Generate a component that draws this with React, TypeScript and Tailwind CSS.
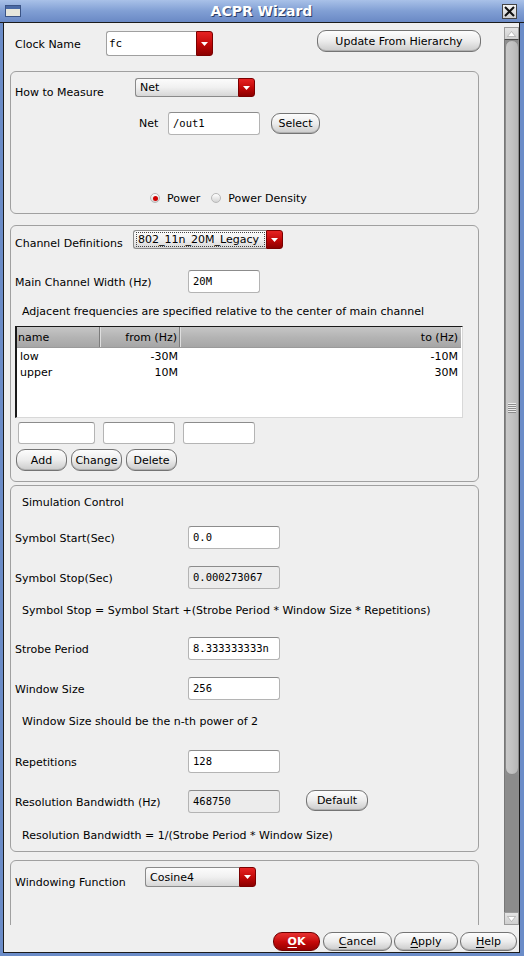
import React from "react";

const sans = "font-['DejaVu_Sans',sans-serif]";
const mono = "font-['DejaVu_Sans_Mono',monospace]";

function Arrow({ down = true }: { down?: boolean }) {
  return (
    <svg width="7" height="4" viewBox="0 0 7 4">
      {down ? <polygon points="0,0 7,0 3.5,4" fill="#fff" /> : <polygon points="0,4 7,4 3.5,0" fill="#fff" />}
    </svg>
  );
}

function RedDrop({ className = "" }: { className?: string }) {
  return (
    <div
      className={`w-[17px] shrink-0 flex items-center justify-center rounded-r-[3px] border border-[#7a0000] bg-linear-to-b from-[#e62222] via-[#c40808] to-[#8c0000] ${className}`}
    >
      <Arrow />
    </div>
  );
}

function Combo({ text, className, focus = false }: { text: string; className: string; focus?: boolean }) {
  return (
    <div className={`flex shrink-0 ${className}`}>
      <div className="flex-1 flex items-center rounded-l-[3px] border border-r-0 border-[#8a8a8a] bg-linear-to-b from-[#fcfcfc] via-[#f0f0f0] to-[#d6d6d6] pl-[2px] pr-[1px] py-[1px]">
        <div
          className={`h-full flex-1 flex items-center pl-[1px] leading-[13px] ${focus ? "border border-dotted border-[#444]" : "border border-transparent"}`}
        >
          {text}
        </div>
      </div>
      <RedDrop />
    </div>
  );
}

function Btn({ children, className = "" }: { children: React.ReactNode; className?: string }) {
  return (
    <div
      className={`shrink-0 flex items-center justify-center rounded-[9px] border border-[#747474] bg-linear-to-b from-[#fdfdfd] via-[#ececec] to-[#cbcbcb] shadow-[inset_0_-1px_0_#b0b0b0] text-black leading-[13px] ${className}`}
    >
      {children}
    </div>
  );
}

function Field({ value = "", ro = false, className = "" }: { value?: string; ro?: boolean; className?: string }) {
  return (
    <div
      className={`shrink-0 flex items-center rounded-[3px] border border-[#b4b4b4] border-t-[#8c8c8c] pl-[4px] pt-[1px] ${mono} text-[10.5px] ${
        ro ? "bg-[#ececec]" : "bg-white"
      } ${className}`}
    >
      {value}
    </div>
  );
}

function Radio({ on }: { on: boolean }) {
  return (
    <div className="w-[10px] h-[10px] shrink-0 rounded-full border border-[#b8b8b8] bg-linear-to-b from-[#ffffff] to-[#d4d4d4] flex items-center justify-center">
      {on && <div className="w-[5px] h-[5px] rounded-full bg-[#d00000]" />}
    </div>
  );
}

function Row({ label, value, ro = false, mt, children }: { label: string; value: string; ro?: boolean; mt: string; children?: React.ReactNode }) {
  return (
    <div className={`flex items-center h-[23px] ${mt}`}>
      <div className="w-[173px] shrink-0 leading-[13px] pt-[1px]">{label}</div>
      <Field value={value} ro={ro} className="w-[92px] h-[23px]" />
      {children}
    </div>
  );
}

function ScrollBar() {
  return (
    <div className="w-[15px] shrink-0 pt-[4px] flex flex-col">
      <div className="h-[13px] flex items-center justify-center bg-linear-to-b from-[#e4e4e4] to-[#cfcfcf] border border-[#9a9a9a] border-b-[#4a4a4a]">
        <svg width="9" height="6" viewBox="0 0 9 6">
          <polygon points="0.5,5.5 8.5,5.5 4.5,0.5" fill="#fff" stroke="#9a9a9a" strokeWidth="0.6" />
        </svg>
      </div>
      <div className="h-[735px] bg-[#8e8e8e] border-l border-[#777]">
        <div className="h-full rounded-[7px] border border-[#8a8a8a] bg-linear-to-r from-[#c8c8c8] via-[#c2c2c2] to-[#b6b6b6] flex flex-col items-center justify-center gap-[1px]">
          {[0, 1, 2, 3, 4].map((i) => (
            <div key={i} className="w-[8px] h-[1px] bg-[#eaeaea] shadow-[0_1px_0_#8a8a8a]" />
          ))}
        </div>
      </div>
      <div className="flex-1 bg-[#8c8c8c] border-l border-[#777]" />
      <div className="h-[13px] flex items-center justify-center bg-linear-to-b from-[#e4e4e4] to-[#cfcfcf] border border-[#9a9a9a]">
        <svg width="9" height="6" viewBox="0 0 9 6">
          <polygon points="0.5,0.5 8.5,0.5 4.5,5.5" fill="#fff" stroke="#9a9a9a" strokeWidth="0.6" />
        </svg>
      </div>
    </div>
  );
}

function U({ c }: { c: string }) {
  return <span className="underline underline-offset-2">{c}</span>;
}

export default function App() {
  return (
    <div className={`w-[524px] h-[956px] bg-[#6b8cc8] flex flex-col text-[11px] text-black ${sans}`}>
      {/* title bar */}
      <div className="h-[23px] shrink-0 flex items-center bg-linear-to-b from-[#a9c1e8] via-[#819fd4] to-[#6a89c5] border-b border-[#1c1c1c]">
        <div className="ml-[5px] w-[16px] h-[12px] border border-[#3b5486] bg-[#e6e6dc] flex flex-col">
          <div className="h-[3px] bg-[#4a6aa6]" />
        </div>
        <div className="flex-1 text-center text-white font-bold text-[14px] leading-[18px] [text-shadow:1px_1px_0_#2b3f69]">
          ACPR Wizard
        </div>
        <div className="mr-[7px] w-[15px] h-[15px] border border-[#444] bg-linear-to-b from-[#f4f4f4] to-[#d0d0d0] flex items-center justify-center">
          <svg width="11" height="11" viewBox="0 0 11 11">
            <path d="M1 1 L10 10 M10 1 L1 10" stroke="#111" strokeWidth="2" />
          </svg>
        </div>
      </div>

      <div className="flex-1 ml-[3px] mr-[4px] mb-[3px] border-l border-r border-b border-[#1c1c1c] bg-[#efefef] flex flex-col">
        <div className="h-[902px] flex">
          <div className="flex-1 overflow-hidden flex flex-col">
            {/* clock row */}
            <div className="h-[48px] shrink-0 flex items-start pl-[11px]">
              <div className="w-[91px] mt-[15px] leading-[13px]">Clock Name</div>
              <div className="mt-[8px] flex w-[107px] h-[25px]">
                <div className={`flex-1 flex items-center pl-[2px] pt-[2px] bg-white border border-r-0 border-[#a0a0a0] rounded-l-[3px] ${mono}`}>fc</div>
                <RedDrop />
              </div>
              <Btn className="ml-[104px] mt-[7px] w-[164px] h-[22px]">Update From Hierarchy</Btn>
            </div>

            {/* how to measure */}
            <div className="ml-[6px] w-[469px] h-[143px] shrink-0 rounded-[6px] border border-[#a0a0a0] pl-[4px] flex flex-col">
              <div className="mt-[6px] h-[19px] flex items-start">
                <div className="w-[120px] mt-[8px] leading-[13px]">How to Measure</div>
                <Combo text="Net" className="w-[120px] h-[19px]" />
              </div>
              <div className="mt-[15px] h-[23px] flex items-center">
                <div className="ml-[124px] w-[29px] leading-[13px]">Net</div>
                <Field value="/out1" className="w-[92px] h-[23px]" />
                <Btn className="ml-[11px] w-[49px] h-[21px]">Select</Btn>
              </div>
              <div className="mt-[56px] h-[14px] flex items-center">
                <div className="ml-[135px]">
                  <Radio on />
                </div>
                <div className="ml-[7px] leading-[13px]">Power</div>
                <div className="ml-[11px]">
                  <Radio on={false} />
                </div>
                <div className="ml-[7px] leading-[13px]">Power Density</div>
              </div>
            </div>

            {/* channel definitions */}
            <div className="mt-[11px] ml-[6px] w-[469px] h-[257px] shrink-0 rounded-[6px] border border-[#a0a0a0] pl-[4px] flex flex-col">
              <div className="mt-[4px] h-[19px] flex items-start">
                <div className="w-[118px] mt-[7px] leading-[13px]">Channel Definitions</div>
                <Combo text="802_11n_20M_Legacy" focus className="w-[150px] h-[19px]" />
              </div>
              <div className="mt-[21px] h-[23px] flex items-center">
                <div className="w-[173px] leading-[13px] pt-[1px]">Main Channel Width (Hz)</div>
                <Field value="20M" className="w-[72px] h-[23px]" />
              </div>
              <div className="mt-[12px] pl-[7px] leading-[13px]">
                Adjacent frequencies are specified relative to the center of main channel
              </div>
              <div className="mt-[8px] w-[448px] h-[92px] shrink-0 bg-white border-t border-l-2 border-[#1a1a1a] border-r border-b border-r-[#d8d8d8] border-b-[#d8d8d8] flex flex-col">
                <div className="h-[21px] flex mr-[1px] bg-linear-to-b from-[#c6c6c6] via-[#b4b4b4] to-[#a6a6a6] border-b border-[#9a9a9a] leading-[13px]">
                  <div className="w-[83px] flex items-center pl-[1px] border-r border-[#7c7c7c] shadow-[1px_0_0_#dedede]">name</div>
                  <div className="w-[80px] flex items-center justify-end pr-[2px] border-r border-[#7c7c7c] shadow-[1px_0_0_#dedede]">from (Hz)</div>
                  <div className="flex-1 flex items-center justify-end pr-[3px]">to (Hz)</div>
                </div>
                {[
                  ["low", "-30M", "-10M"],
                  ["upper", "10M", "30M"],
                ].map((r) => (
                  <div key={r[0]} className="h-[16px] flex items-center leading-[13px] mr-[1px]">
                    <div className="w-[83px] pl-[3px]">{r[0]}</div>
                    <div className="w-[81px] text-right pr-[3px]">{r[1]}</div>
                    <div className="flex-1 text-right pr-[3px]">{r[2]}</div>
                  </div>
                ))}
              </div>
              <div className="mt-[4px] h-[22px] flex">
                <Field className="ml-[3px] w-[77px] h-[22px]" />
                <Field className="ml-[8px] w-[72px] h-[22px]" />
                <Field className="ml-[8px] w-[72px] h-[22px]" />
              </div>
              <div className="mt-[5px] h-[22px] flex">
                <Btn className="ml-[1px] w-[51px] h-[22px]">Add</Btn>
                <Btn className="ml-[4px] w-[51px] h-[22px]">Change</Btn>
                <Btn className="ml-[4px] w-[51px] h-[22px]">Delete</Btn>
              </div>
            </div>

            {/* simulation control */}
            <div className="mt-[3px] ml-[6px] w-[469px] h-[367px] shrink-0 rounded-[6px] border border-[#a0a0a0] pl-[4px] flex flex-col">
              <div className="mt-[10px] pl-[7px] leading-[13px]">Simulation Control</div>
              <Row mt="mt-[17px]" label="Symbol Start(Sec)" value="0.0" />
              <Row mt="mt-[17px]" label="Symbol Stop(Sec)" value="0.000273067" ro />
              <div className="mt-[15px] pl-[7px] leading-[13px]">
                Symbol Stop = Symbol Start +(Strobe Period * Window Size * Repetitions)
              </div>
              <Row mt="mt-[20px]" label="Strobe Period" value="8.333333333n" />
              <Row mt="mt-[17px]" label="Window Size" value="256" />
              <div className="mt-[15px] pl-[7px] leading-[13px]">Window Size should be the n-th power of 2</div>
              <Row mt="mt-[22px]" label="Repetitions" value="128" />
              <Row mt="mt-[17px]" label="Resolution Bandwidth (Hz)" value="468750" ro>
                <Btn className="ml-[26px] w-[62px] h-[21px] -mt-[2px]">Default</Btn>
              </Row>
              <div className="mt-[16px] pl-[7px] leading-[13px]">
                Resolution Bandwidth = 1/(Strobe Period * Window Size)
              </div>
            </div>

            {/* windowing */}
            <div className="mt-[8px] ml-[6px] w-[469px] h-[100px] shrink-0 rounded-[6px] border border-[#a0a0a0] pl-[4px] flex flex-col">
              <div className="mt-[6px] h-[20px] flex items-start">
                <div className="w-[130px] mt-[9px] leading-[13px]">Windowing Function</div>
                <Combo text="Cosine4" className="w-[111px] h-[20px]" />
              </div>
            </div>
          </div>
          <ScrollBar />
        </div>

        {/* button bar */}
        <div className="flex-1 flex items-start justify-end pr-[2px]">
          <div className="mt-[7px] w-[47px] h-[19px] shrink-0 flex items-center justify-center rounded-[9px] border border-[#6a0000] bg-linear-to-b from-[#e83030] via-[#c80a0a] to-[#960000] text-white font-bold leading-[13px]">
            <U c="O" />K
          </div>
          <Btn className="mt-[7px] ml-[3px] w-[69px] h-[19px]">
            <U c="C" />ancel
          </Btn>
          <Btn className="mt-[7px] ml-[2px] w-[64px] h-[19px]">
            <U c="A" />pply
          </Btn>
          <Btn className="mt-[7px] ml-[2px] w-[57px] h-[19px]">
            <U c="H" />elp
          </Btn>
        </div>
      </div>
    </div>
  );
}
